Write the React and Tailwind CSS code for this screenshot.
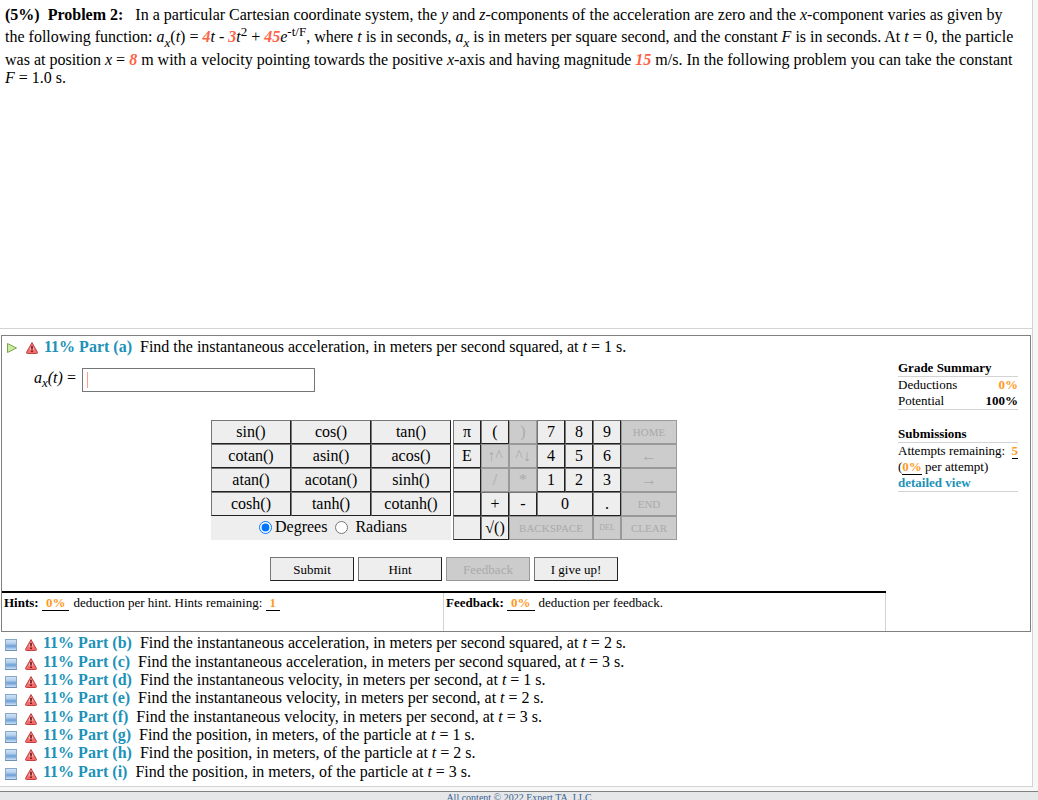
import { useState } from "react";

const parts = [
  { id: "b", text: "Find the instantaneous acceleration, in meters per second squared, at", time: 2 },
  { id: "c", text: "Find the instantaneous acceleration, in meters per second squared, at", time: 3 },
  { id: "d", text: "Find the instantaneous velocity, in meters per second, at", time: 1 },
  { id: "e", text: "Find the instantaneous velocity, in meters per second, at", time: 2 },
  { id: "f", text: "Find the instantaneous velocity, in meters per second, at", time: 3 },
  { id: "g", text: "Find the position, in meters, of the particle at", time: 1 },
  { id: "h", text: "Find the position, in meters, of the particle at", time: 2 },
  { id: "i", text: "Find the position, in meters, of the particle at", time: 3 },
];

const functions = [
  "sin()", "cos()", "tan()",
  "cotan()", "asin()", "acos()",
  "atan()", "acotan()", "sinh()",
  "cosh()", "tanh()", "cotanh()",
];

const keypad = [
  { label: "π" }, { label: "(" }, { label: ")", off: true }, { label: "7" }, { label: "8" }, { label: "9" },
  { label: "HOME", off: true, size: "text-[11px]" },
  { label: "E" }, { label: "↑^", off: true }, { label: "^↓", off: true }, { label: "4" }, { label: "5" }, { label: "6" },
  { label: "←", off: true },
  { label: "" }, { label: "/", off: true }, { label: "*", off: true }, { label: "1" }, { label: "2" }, { label: "3" },
  { label: "→", off: true },
  { label: "" }, { label: "+" }, { label: "-" }, { label: "0", span: "col-span-2" }, { label: "." },
  { label: "END", off: true, size: "text-[11px]" },
  { label: "" }, { label: "√()" },
  { label: "BACKSPACE", off: true, size: "text-[11px]", span: "col-span-3" },
  { label: "DEL", off: true, size: "text-[8px]" },
  { label: "CLEAR", off: true, size: "text-[11px]" },
];

function Key({ label, off = false, size = "text-base", span = "" }) {
  return (
    <button
      type="button"
      disabled={off}
      className={`flex h-6 items-center justify-center overflow-hidden border leading-none whitespace-nowrap ${size} ${span} ${
        off
          ? "border-[#999] bg-[#ccc] text-[#aaa]"
          : "border-t-[#767676] border-r-[#212121] border-b-[#212121] border-l-[#767676] bg-[#eee] text-black"
      }`}
    >
      {label}
    </button>
  );
}

function WarningIcon() {
  return (
    <svg viewBox="0 0 12 12" className="h-3 w-3 shrink-0" aria-hidden="true">
      <path d="M6 .6 L11.4 10.2 Q11.7 11.5 10.6 11.5 H1.4 Q.3 11.5 .6 10.2 Z" fill="#f26d6d" stroke="#c23f3f" />
      <path d="M6 2.4 L8.6 7.6 H3.4 Z" fill="#fbc0c0" />
      <path d="M5.2 3.8 H6.8 V7.6 H5.2 Z M5.2 8.4 H6.8 V10 H5.2 Z" fill="#6d0c0c" />
    </svg>
  );
}

function ExpandIcon() {
  return (
    <svg viewBox="0 0 12 12" className="h-3 w-3 shrink-0" aria-hidden="true">
      <defs>
        <linearGradient id="box" x1="0" y1="0" x2="0" y2="1">
          <stop offset="0" stopColor="#d3e5f5" />
          <stop offset=".35" stopColor="#b5d0ec" />
          <stop offset=".6" stopColor="#6c9fd6" />
          <stop offset="1" stopColor="#dcebf8" />
        </linearGradient>
      </defs>
      <rect x=".5" y=".5" width="11" height="11" fill="url(#box)" stroke="#86a9cb" />
      <path d="M0 11.5 H12" stroke="#6d91b5" />
    </svg>
  );
}

function OpenIcon() {
  return (
    <svg viewBox="0 0 12 12" className="h-3 w-3 shrink-0" aria-hidden="true">
      <path d="M1.5 1.5 L10.5 6 L1.5 10.5 Z" fill="#cdeaa2" stroke="#7ba650" strokeLinejoin="round" />
    </svg>
  );
}

function PartTitle({ id, text, time }) {
  return (
    <p className="whitespace-nowrap">
      <b className="mr-2 text-[#2092b8]">11% Part ({id})</b>
      {text} <i>t</i> = {time} s.
    </p>
  );
}

function Blank({ children }) {
  return <b className="mr-1 border-b border-black px-1 text-[#ff9a1f]">{children}</b>;
}

function Sub({ children }) {
  return <sub className="static align-sub text-[13px] leading-4">{children}</sub>;
}

function Sup({ children }) {
  return <sup className="static align-super text-[13px] leading-4">{children}</sup>;
}

function Given({ children }) {
  return <i className="font-bold text-[#ff6347]">{children}</i>;
}

function Problem() {
  return (
    <section className="h-[329px] border-b border-[#d3d3d3] pt-1.5 pr-2.5 pl-[5px] leading-[18px]">
      <b className="mr-3">(5%)&nbsp; Problem 2:</b>
      In a particular Cartesian coordinate system, the <i>y</i> and <i>z</i>-components of the acceleration are
      zero and the <i>x</i>-component varies as given by the following function: <i>a</i>
      <Sub><i>x</i></Sub>(<i>t</i>) = <Given>4</Given><i>t</i> - <Given>3</Given><i>t</i>
      <Sup>2</Sup> + <Given>45</Given><i>e</i>
      <Sup>-t/F</Sup>, where <i>t</i> is in seconds, <i>a</i>
      <Sub><i>x</i></Sub> is in meters per square second, and the constant <i>F</i> is in seconds. At{" "}
      <i>t</i> = 0, the particle was at position <i>x</i> = <Given>8</Given> m with a velocity pointing towards
      the positive <i>x</i>-axis and having magnitude <Given>15</Given> m/s. In the following problem you can
      take the constant <i>F</i> = 1.0 s.
    </section>
  );
}

function Summary() {
  return (
    <aside className="w-36 shrink-0 px-3 pt-6 text-[13px] leading-4">
      <h2 className="border-b border-[#d3d3d3] font-bold">Grade Summary</h2>
      <dl className="border-b border-[#d3d3d3]">
        <div className="flex justify-between">
          <dt>Deductions</dt>
          <dd className="font-bold text-[#ff9a1f]">0%</dd>
        </div>
        <div className="flex justify-between">
          <dt>Potential</dt>
          <dd className="font-bold">100%</dd>
        </div>
      </dl>
      <h2 className="mt-4 border-b border-[#d3d3d3] font-bold">Submissions</h2>
      <div className="border-b border-[#d3d3d3]">
        <p className="flex h-4 justify-between whitespace-nowrap">
          Attempts remaining: <b className="border-b border-black text-[#ff9a1f]">5</b>
        </p>
        <p>
          (<b className="border-b border-black text-[#ff9a1f]">0%</b> per attempt)
        </p>
        <a href="#detail" className="block font-bold text-[#2092b8]">detailed view</a>
      </div>
    </aside>
  );
}

function Calculator({ unit, onUnit }) {
  return (
    <div className="flex justify-center gap-0.5">
      <div className="w-60 bg-[#eee]">
        <div className="grid grid-cols-3">
          {functions.map((name) => (
            <Key key={name} label={name} />
          ))}
        </div>
        <div className="flex h-[22px] items-center justify-center gap-2 pl-1">
          <label className="flex items-center gap-[3px]">
            <input type="radio" name="unit" checked={unit === "deg"} onChange={() => onUnit("deg")} />
            Degrees
          </label>
          <label className="flex items-center gap-[7px]">
            <input type="radio" name="unit" checked={unit === "rad"} onChange={() => onUnit("rad")} />
            Radians
          </label>
        </div>
      </div>
      <div className="grid grid-cols-[repeat(6,28px)_56px]">
        {keypad.map((key, i) => (
          <Key key={i} {...key} />
        ))}
      </div>
    </div>
  );
}

function App() {
  const [answer, setAnswer] = useState("");
  const [unit, setUnit] = useState("deg");

  return (
    <div className="flex h-screen flex-col overflow-hidden bg-[#f7f7f7] font-['Liberation_Serif',serif] text-base text-black">
      <main className="mr-[5px] border-r border-b border-[#d3d3d3] bg-white pb-[5px]">
        <Problem />

        <section className="mt-1.5 mr-px ml-px flex border border-[#808080]">
          <div className="min-w-0 grow">
            <div className="flex items-center gap-1.5 pt-0.5 pl-1 leading-[18px]">
              <div className="flex gap-2 pt-0.5">
                <OpenIcon />
                <WarningIcon />
              </div>
              <PartTitle id="a" text={parts[0].text} time={1} />
            </div>
            <div className="mt-3 flex pl-8">
              <label htmlFor="answer" className="mr-1.5 leading-5 italic">
                a<Sub>x</Sub>(t) <span className="not-italic">=</span>
              </label>
              <div className="flex h-6 w-[233px] items-center border border-[#767676] px-1">
                <span className="h-4 w-px bg-[#ff9c8a]" />
                <input
                  id="answer"
                  value={answer}
                  onChange={(e) => setAnswer(e.target.value)}
                  className="min-w-0 grow outline-none"
                />
              </div>
            </div>

            <div className="mt-7">
              <Calculator unit={unit} onUnit={setUnit} />
            </div>

            <div className="mt-[17px] grid grid-cols-[repeat(4,84px)] justify-center gap-1">
              <Key label="Submit" size="text-[13px]" />
              <Key label="Hint" size="text-[13px]" />
              <Key label="Feedback" size="text-[13px]" off />
              <Key label="I give up!" size="text-[13px]" />
            </div>

            <div className="mt-2.5 grid h-10 grid-cols-2 border-t-2 border-black text-[13px] leading-4">
              <p className="border-r border-[#d3d3d3] pt-0.5 pl-0.5">
                <b>Hints:</b> <Blank>0%</Blank>deduction per hint. Hints remaining: <Blank>1</Blank>
              </p>
              <p className="border-r border-[#d3d3d3] pt-0.5 pl-0.5">
                <b>Feedback:</b> <Blank>0%</Blank>deduction per feedback.
              </p>
            </div>
          </div>
          <Summary />
        </section>

        <ul className="mt-0.5 grid h-[147px] auto-rows-fr">
          {parts.map((part) => (
            <li key={part.id} className="flex items-center gap-1.5 pl-[5px] leading-[18px]">
              <div className="flex gap-2 pt-1">
                <ExpandIcon />
                <WarningIcon />
              </div>
              <PartTitle {...part} />
            </li>
          ))}
        </ul>
      </main>

      <footer className="mt-1 grow border-t border-[#808080] bg-[#e6e7e8] text-center text-[10px] leading-3 text-[#3a5f95]">
        All content © 2022 Expert TA, LLC
      </footer>
    </div>
  );
}

export default App;
